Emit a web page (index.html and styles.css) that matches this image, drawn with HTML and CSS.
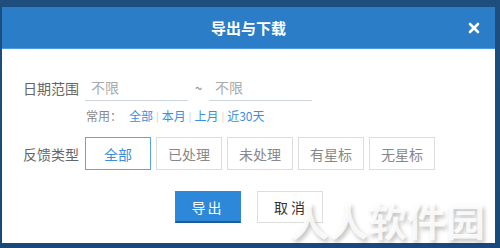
FILE: index.html
```html
<!DOCTYPE html>
<html lang="zh-CN">

<head>
    <meta charset="UTF-8">
    <title>导出与下载</title>
    <link rel="stylesheet" href="styles.css">
</head>

<body>
    <div class="dialog">
        <div class="dialog-head">
            <span class="title">导出与下载</span>
            <svg class="close" width="12" height="12" viewBox="0 0 12 12">
                <path d="M2 2 L10 10 M10 2 L2 10" stroke="#fff" stroke-width="2.6" stroke-linecap="round"/>
            </svg>
        </div>
        <div class="dialog-body">
            <div class="row">
                <label class="label">日期范围</label>
                <input class="date" type="text" placeholder="不限">
                <span class="tilde">~</span>
                <input class="date" type="text" placeholder="不限">
            </div>
            <div class="quick">
                <span class="quick-title">常用：</span>
                <a>全部</a><i>|</i><a>本月</a><i>|</i><a>上月</a><i>|</i><a>近30天</a>
            </div>
            <div class="row types">
                <label class="label">反馈类型</label>
                <button class="opt active">全部</button>
                <button class="opt">已处理</button>
                <button class="opt">未处理</button>
                <button class="opt">有星标</button>
                <button class="opt">无星标</button>
            </div>
            <div class="actions">
                <button class="btn primary">导出</button>
                <button class="btn">取&nbsp;消</button>
            </div>
        </div>
        <div class="watermark">人人软件园</div>
    </div>
</body>

</html>
```

FILE: styles.css
```css
* {
    margin: 0;
    padding: 0;
    box-sizing: border-box;
}

body {
    background: linear-gradient(#1d4e7e, #174a7a);
    font-family: "Liberation Sans", "Noto Sans CJK SC", sans-serif;
    height: 248px;
    overflow: hidden;
}

.dialog {
    position: relative;
    margin: 7px 0 0 2px;
    width: 493px;
    background: #fff;
}

.dialog-head {
    height: 42px;
    background: #2a7dc6;
    border-bottom: 1px solid #4a9be0;
    display: flex;
    align-items: center;
    justify-content: center;
    position: relative;
}

.title {
    color: #fff;
    font-size: 15px;
    font-weight: bold;
    font-family: "Noto Sans CJK SC", sans-serif;
}

.close {
    position: absolute;
    right: 15px;
    top: 15px;
}

.dialog-body {
    padding: 25px 0 20px 21px;
    font-family: "Noto Sans CJK SC", sans-serif;
}

.row {
    display: flex;
    align-items: center;
}

.label {
    width: 62px;
    color: #666;
    font-size: 14px;
}

.date {
    width: 103px;
    height: 27px;
    border: none;
    border-bottom: 1px solid #cdd6df;
    padding: 0 6px;
    font-size: 14px;
    font-family: "Noto Sans CJK SC", sans-serif;
    outline: none;
}

.date::placeholder {
    color: #aaa;
}

.tilde {
    width: 21px;
    text-align: center;
    color: #888;
    font-size: 13px;
}

.quick {
    margin: 4px 0 0 63px;
    font-size: 12px;
    color: #888;
    height: 20px;
    display: flex;
    align-items: center;
}

.quick-title {
    margin-right: 7px;
}

.quick a {
    color: #3a8ee0;
}

.quick i {
    font-style: normal;
    color: #ccc;
    font-size: 10px;
    margin: 0 3px;
}

.types {
    margin-top: 12px;
}

.opt {
    width: 66px;
    height: 33px;
    margin-right: 5px;
    border: 1px solid #ddd;
    background: #fff;
    color: #888;
    font-size: 14px;
    font-family: "Noto Sans CJK SC", sans-serif;
}

.opt.active {
    border-color: #5aa6ea;
    color: #3a8ee0;
}

.actions {
    margin: 21px 0 0 -21px;
    display: flex;
    justify-content: center;
    gap: 16px;
}

.btn {
    width: 66px;
    height: 32px;
    border: 1px solid #ddd;
    background: #fff;
    color: #333;
    font-size: 14px;
    font-family: "Noto Sans CJK SC", sans-serif;
}

.btn.primary {
    background: #2d88da;
    border-color: #2d88da;
    border-bottom: 2px solid #1c5d9c;
    color: #fff;
    letter-spacing: 2px;
}

.watermark {
    position: absolute;
    left: 288px;
    top: 184px;
    font-size: 39px;
    font-weight: bold;
    color: rgba(255, 255, 255, 0.85);
    text-shadow: 2px 3px 4px rgba(0, 0, 0, 0.25);
    font-family: "Noto Sans CJK SC", sans-serif;
    pointer-events: none;
}
```
